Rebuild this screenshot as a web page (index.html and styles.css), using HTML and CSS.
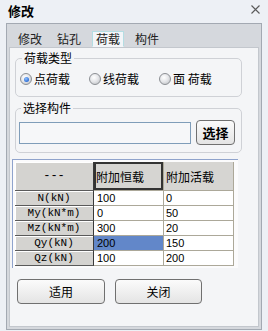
FILE: index.html
```html
<!DOCTYPE html>
<html lang="zh-CN">
<head>
<meta charset="utf-8">
<title>修改</title>
<link rel="stylesheet" href="styles.css">
</head>
<body>
<div class="window">
  <div class="titlebar">
    <span class="title">修改</span>
    <svg class="close" width="9" height="9" viewBox="0 0 9 9"><path d="M0.5 0.5L8.5 8.5M8.5 0.5L0.5 8.5" stroke="#5a5a5a" stroke-width="1.1" fill="none"/></svg>
  </div>
  <div class="frame">
    <div class="tabs">
      <span class="tab">修改</span>
      <span class="tab">钻孔</span>
      <span class="tab active">荷载</span>
      <span class="tab">构件</span>
    </div>
    <div class="panel">
      <fieldset class="group g1">
        <legend>荷载类型</legend>
        <div class="radios">
          <span class="radio-item"><span class="radio checked"></span>点荷载</span>
          <span class="radio-item"><span class="radio"></span>线荷载</span>
          <span class="radio-item"><span class="radio"></span>面 荷载</span>
        </div>
      </fieldset>
      <fieldset class="group g2">
        <legend>选择构件</legend>
        <div class="pick-row">
          <div class="textbox"></div>
          <div class="btn btn-pick">选择</div>
        </div>
      </fieldset>
      <div class="grid-wrap">
        <div class="grid">
          <div class="cell rowhead corner">---</div>
          <div class="cell colhead sel-head">附加恒载</div>
          <div class="cell colhead">附加活载</div>

          <div class="cell rowhead">N(kN)</div>
          <div class="cell data">100</div>
          <div class="cell data">0</div>

          <div class="cell rowhead">My(kN*m)</div>
          <div class="cell data">0</div>
          <div class="cell data">50</div>

          <div class="cell rowhead">Mz(kN*m)</div>
          <div class="cell data">300</div>
          <div class="cell data">20</div>

          <div class="cell rowhead">Qy(kN)</div>
          <div class="cell data selected">200</div>
          <div class="cell data">150</div>

          <div class="cell rowhead">Qz(kN)</div>
          <div class="cell data">100</div>
          <div class="cell data">200</div>
        </div>
      </div>
      <div class="actions">
        <div class="btn btn-wide">适用</div>
        <div class="btn btn-wide btn-close">关闭</div>
      </div>
    </div>
  </div>
</div>
</body>
</html>
```

FILE: styles.css
```css
html, body {
  margin: 0;
  padding: 0;
}
body {
  background: #edf0f5;
  font-family: "Noto Sans CJK SC", "Liberation Sans", sans-serif;
  font-size: 12px;
  color: #000;
}
.window {
  width: 268px;
  height: 331px;
  display: flex;
  flex-direction: column;
}
.titlebar {
  height: 23px;
  display: flex;
  align-items: center;
  justify-content: space-between;
  padding: 0 8px 0 8px;
  box-sizing: border-box;
}
.title {
  font-weight: bold;
  font-size: 13px;
  line-height: 14px;
  margin-top: -2px;
}
.close {
  margin-top: -4px;
  margin-right: 0;
}
.frame {
  margin: 0 6px;
  height: 305px;
  border: 1px solid #a3a9b2;
  background: #d5d8dd;
  display: flex;
  flex-direction: column;
}
.tabs {
  height: 23px;
  box-sizing: border-box;
  padding: 8px 0 0 7px;
  display: flex;
  gap: 7px;
  align-items: flex-start;
}
.tab {
  padding: 0 3px;
  height: 14px;
  line-height: 14px;
  font-size: 12px;
  color: #222;
  border: 1px solid transparent;
  margin-top: -1px;
}
.tab.active {
  background: #f3f5f8;
  border-color: #b4dde3;
  border-bottom-color: #f3f5f8;
}
.panel {
  flex: 1;
  margin: 0 2px 2px 2px;
  border: 1px solid #c3c7cd;
  background: #f4f5f7;
  display: flex;
  flex-direction: column;
}
.group {
  margin: 0 0 0 5px;
  width: 227px;
  box-sizing: border-box;
  border: 1px solid #cfd1d6;
  border-radius: 5px;
  min-width: 0;
}
.group legend {
  font-size: 12px;
  line-height: 14px;
  padding: 0 2px;
  margin-left: 2px;
}
.g1 {
  margin-top: 3px;
  padding: 8px 0 11px 4px;
}
.g2 {
  margin-top: 4px;
  padding: 5px 0 7px 3px;
}
.radios {
  display: flex;
  height: 12px;
  align-items: center;
}
.radio-item {
  display: flex;
  align-items: center;
  gap: 2px;
  line-height: 12px;
}
.radio-item:nth-child(1) { width: 69px; }
.radio-item:nth-child(2) { width: 70px; }
.radio {
  width: 12px;
  height: 12px;
  box-sizing: border-box;
  border-radius: 50%;
  border: 1px solid #8c8f94;
  background: radial-gradient(circle at 40% 35%, #ffffff 0%, #e6e7ea 45%, #b7babf 100%);
  display: inline-flex;
  align-items: center;
  justify-content: center;
}
.radio.checked::after {
  content: "";
  width: 5px;
  height: 5px;
  border-radius: 50%;
  background: radial-gradient(circle at 40% 35%, #8fc0ff 0%, #2f6fd6 70%);
}
.pick-row {
  display: flex;
  align-items: center;
  gap: 5px;
  height: 25px;
}
.textbox {
  width: 172px;
  height: 22px;
  box-sizing: border-box;
  border: 1px solid #7f9db9;
  background: #f6f7f9;
}
.btn {
  box-sizing: border-box;
  border: 1px solid #707070;
  border-radius: 4px;
  background: linear-gradient(#fbfbfb, #e4e4e4);
  display: flex;
  align-items: center;
  justify-content: center;
  font-size: 12px;
}
.btn-pick {
  width: 39px;
  height: 25px;
  font-weight: bold;
  font-size: 13px;
}
.grid-wrap {
  margin: 6px 0 0 2px;
  width: 226px;
  box-sizing: border-box;
  border-top: 1px solid #8fa3cc;
  border-left: 1px solid #8fa3cc;
  background: #fbfbfc;
  padding: 2px 0 2px 2px;
}
.grid {
  display: grid;
  grid-template-columns: 79px 70px 70px;
  grid-template-rows: 29px repeat(5, 15px);
  width: 219px;
}
.cell {
  box-sizing: border-box;
  border-right: 1px solid #aca899;
  border-bottom: 1px solid #aca899;
  display: flex;
  align-items: center;
  background: #fff;
  white-space: nowrap;
  overflow: hidden;
}
.rowhead {
  background: #d4d3d0;
  justify-content: center;
  font-family: "Liberation Mono", "DejaVu Sans Mono", monospace;
  font-size: 11px;
  border-right: 1px solid #3a3a3a;
  border-bottom: 1px solid #5a5a5a;
  box-shadow: inset 1px 1px 0 #ffffff;
}
.corner {
  font-size: 12px;
}
.colhead {
  background: #d6d5d2;
  padding-left: 2px;
  font-size: 12px;
}
.sel-head {
  box-shadow: inset 0 0 0 2px #333333;
  padding-left: 2px;
}
.data {
  font-family: "Liberation Sans", Arial, sans-serif;
  font-size: 11px;
  padding-left: 3px;
}
.data:nth-child(3n) {
  padding-left: 2px;
}
.selected {
  background: #6287c9;
}
.actions {
  margin: 11px 0 0 7px;
  display: flex;
  gap: 10px;
}
.btn-wide {
  width: 88px;
  height: 25px;
}
.btn-close {
  width: 87px;
}
```
